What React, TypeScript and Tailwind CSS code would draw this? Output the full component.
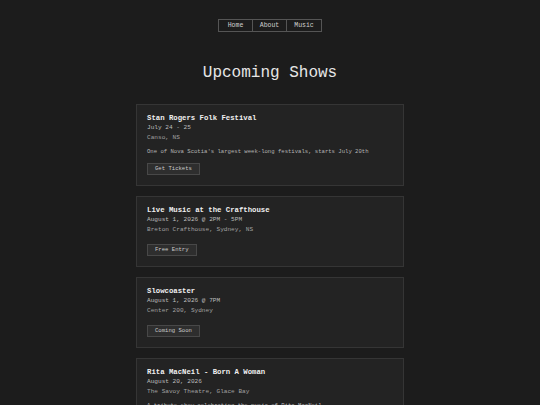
type Show = {
  title: string;
  date: string;
  venue: string;
  desc?: string;
  button: string;
};

const shows: Show[] = [
  {
    title: "Stan Rogers Folk Festival",
    date: "July 24 - 25",
    venue: "Canso, NS",
    desc: "One of Nova Scotia's largest week-long festivals, starts July 20th",
    button: "Get Tickets",
  },
  {
    title: "Live Music at the Crafthouse",
    date: "August 1, 2026 @ 2PM - 5PM",
    venue: "Breton Crafthouse, Sydney, NS",
    button: "Free Entry",
  },
  {
    title: "Slowcoaster",
    date: "August 1, 2026 @ 7PM",
    venue: "Center 200, Sydney",
    button: "Coming Soon",
  },
  {
    title: "Rita MacNeil - Born A Woman",
    date: "August 20, 2026",
    venue: "The Savoy Theatre, Glace Bay",
    desc: "A tribute show celebrating the music of Rita MacNeil",
    button: "Get Tickets",
  },
];

function App() {
  return (
    <div
      className="min-h-screen bg-[#1c1c1c] text-[#dddddd] pt-[19px]"
      style={{ fontFamily: '"Liberation Mono", "DejaVu Sans Mono", monospace' }}
    >
      <nav className="flex justify-center">
        <div className="flex border border-[#555] text-[6.5px] leading-[11px] text-[#d0d0d0]">
          <a className="w-[34px] text-center border-r border-[#555]">Home</a>
          <a className="w-[34px] text-center border-r border-[#555]">About</a>
          <a className="w-[34px] text-center">Music</a>
        </div>
      </nav>

      <h1 className="mt-[31px] text-center text-[16px] leading-[20px] text-[#e6e6e6]">
        Upcoming Shows
      </h1>

      <div className="mt-[21px] flex flex-col items-center gap-[10px] pb-6">
        {shows.map((s, i) => (
          <div
            key={i}
            className="w-[268px] bg-[#232323] border border-[#353535] px-[10px] pt-[8px] pb-[10px] text-[6px] leading-[10px]"
          >
            <p className="text-[7.3px] leading-[10px] font-bold text-[#f0f0f0]">{s.title}</p>
            <p className="text-[6.1px] leading-[10px] text-[#bdbdbd]">{s.date}</p>
            <p className="text-[6.1px] leading-[10px] text-[#a0a0a0]">{s.venue}</p>
            {s.desc && (
              <p className="mt-[4px] text-[5.6px] leading-[10px] text-[#b4b4b4]">{s.desc}</p>
            )}
            <button
              className={`${s.desc ? "mt-[6px]" : "mt-[9px]"} block h-[12px] px-[7px] bg-[#2e2e2e] border border-[#484848] text-[5.6px] leading-[10px] text-[#cccccc]`}
            >
              {s.button}
            </button>
          </div>
        ))}
      </div>
    </div>
  );
}

export default App;
